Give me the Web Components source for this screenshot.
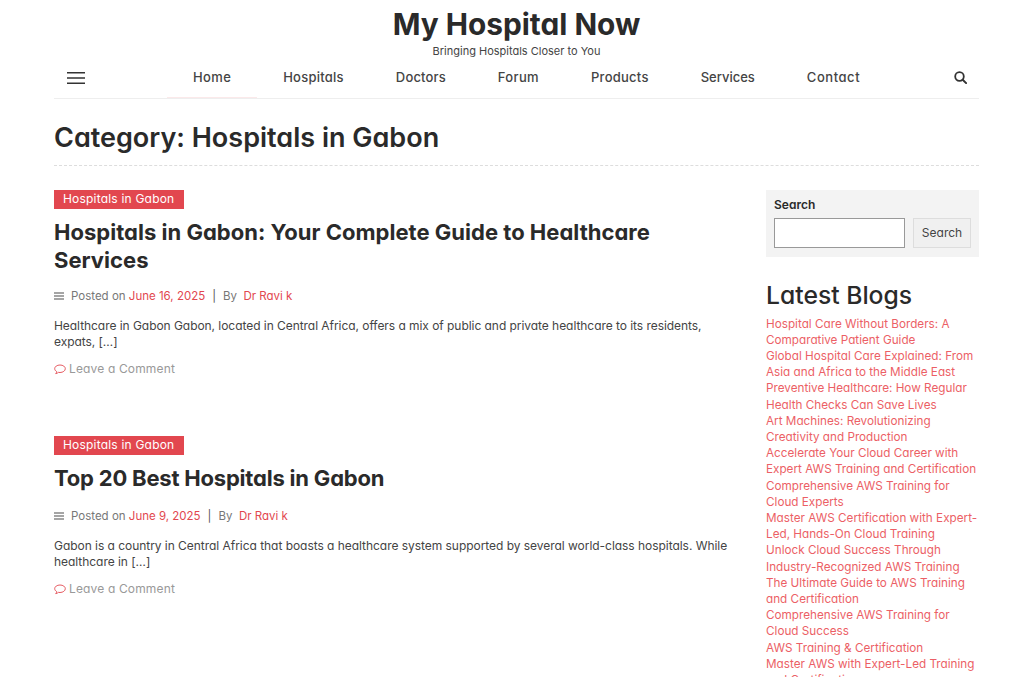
<!DOCTYPE html>
<html lang="en">
<head>
<meta charset="UTF-8">
<title>My Hospital Now</title>
<style>
  html, body { margin: 0; height: 677px; overflow: hidden; background: #fff; }
  body { font-family: Inter, "Liberation Sans", sans-serif; font-feature-settings: "cv11"; color: #333; }
</style>
</head>
<body>
<site-page>
  <site-header></site-header>
  <page-title>Category: Hospitals in Gabon</page-title>
  <div style="display:grid;grid-template-columns:676px 213px;justify-content:space-between;margin-top:24px">
    <div>
      <blog-post style="--title-ls:.02px;--text-ls:-.05px" title-text="Hospitals in Gabon: Your Complete Guide to Healthcare Services" date="June 16, 2025" excerpt="Healthcare in Gabon Gabon, located in Central Africa, offers a mix of public and private healthcare to its residents, expats, [&#8230;]"></blog-post>
      <blog-post style="--title-ls:-.2px;--text-ls:-.04px;--meta-gap:16px" title-text="Top 20 Best Hospitals in Gabon" date="June 9, 2025" excerpt="Gabon is a country in Central Africa that boasts a healthcare system supported by several world-class hospitals. While healthcare in [&#8230;]"></blog-post>
    </div>
    <side-bar></side-bar>
  </div>
</site-page>
<script>
  class SitePage extends HTMLElement {
    constructor() {
      super();
      this.attachShadow({mode: "open"});
      this.shadowRoot.innerHTML = `
        <style>
          :host { display: block; padding: 0 45px 0 54px; height: 677px; overflow: hidden; }
        </style>
        <slot></slot>`;
    }
  }

  class SiteHeader extends HTMLElement {
    constructor() {
      super();
      this.attachShadow({mode: "open"});
      const links = [["Home", .35], ["Hospitals", .25], ["Doctors", .15], ["Forum", .35], ["Products", .25], ["Services", 0], ["Contact", .55]];
      this.shadowRoot.innerHTML = `
        <style>
          :host { display: block; }
          .brand { text-align: center; height: 60px; padding-top: 6px; box-sizing: border-box; }
          .name { font-size: 29.8px; font-weight: 700; line-height: 36px; color: #2a2a2a; }
          .tag { font-size: 11px; line-height: 14px; margin-top: 2px; color: #444; }
          nav { display: flex; align-items: stretch; height: 39px; border-bottom: 1px solid #eee; box-sizing: border-box; }
          .burger { width: 113px; padding: 0 0 3px 13px; box-sizing: border-box; display: flex; align-items: center; }
          ul { display: flex; margin: 0; padding: 0; list-style: none; flex: 1; }
          li { padding: 0 26px; font-size: 13px; font-weight: 500; line-height: 35px; color: #444; }
          li.on { box-shadow: inset 0 -1px 0 #fbe9ea; }
          .find { display: flex; align-items: center; padding: 0 12px 3px 0; }
        </style>
        <div class="brand">
          <div class="name">My Hospital Now</div>
          <div class="tag">Bringing Hospitals Closer to You</div>
        </div>
        <nav>
          <div class="burger">
            <svg width="18" height="12" viewBox="0 0 18 12"><path d="M0 .7h18M0 6h18M0 11.300h18" stroke="#333" stroke-width="1.4"/></svg>
          </div>
          <ul>${links.map(([l, s], i) => `<li class="${i ? "" : "on"}" style="letter-spacing:${s}px">${l}</li>`).join("")}</ul>
          <div class="find">
            <svg width="13" height="13" viewBox="0 0 13 13"><circle cx="5.5" cy="5.5" r="4.3" fill="none" stroke="#333" stroke-width="1.8"/><path d="M8.7 8.7l3.4 3.4" stroke="#333" stroke-width="2" stroke-linecap="round"/></svg>
          </div>
        </nav>`;
    }
  }

  class PageTitle extends HTMLElement {
    constructor() {
      super();
      this.attachShadow({mode: "open"});
      this.shadowRoot.innerHTML = `
        <style>
          :host { display: block; font-size: 27px; font-weight: 600; line-height: 34px; color: #2a2a2a;
                  padding: 22px 0 10px; border-bottom: 1px dashed #ddd; }
        </style>
        <slot></slot>`;
    }
  }

  class BlogPost extends HTMLElement {
    constructor() {
      super();
      this.attachShadow({mode: "open"});
      this.shadowRoot.innerHTML = `
        <style>
          :host { display: block; margin-bottom: 59px; }
          .cat { display: inline-block; background: #e2474f; color: #fff; font-size: 12px; letter-spacing: .2px; line-height: 18px; padding: 0 10px 1px 9px; vertical-align: top; }
          h2 { margin: 8px 0 0; font-size: 22px; font-weight: 700; line-height: 28px; color: #2a2a2a; letter-spacing: var(--title-ls, 0); }
          .meta { margin-top: var(--meta-gap, 14px); font-size: 11.5px; line-height: 16px; color: #777; display: flex; align-items: center; }
          .meta svg { margin-right: 7px; }
          .meta b { font-weight: 400; color: #e2474f; }
          .sep { margin: 0 7px; color: #555; }
          p { margin: 14px 0 0; font-size: 12px; letter-spacing: var(--text-ls, 0); line-height: 16px; color: #444; }
          .more { margin-top: 11px; font-size: 12px; letter-spacing: .15px; line-height: 16px; color: #999; display: flex; align-items: center; gap: 3px; }
        </style>
        <span class="cat">Hospitals in Gabon</span>
        <h2></h2>
        <div class="meta">
          <svg width="10" height="8" viewBox="0 0 10 8"><path d="M0 1h10M0 4h10M0 7h10" stroke="#888" stroke-width="1.4"/></svg>
          Posted on&nbsp;<b class="date"></b><span class="sep">|</span>By&nbsp;&nbsp;<b>Dr Ravi k</b>
        </div>
        <p></p>
        <div class="more">
          <svg width="12" height="11" viewBox="0 0 12 11"><path d="M6 1C3 1 .7 2.600 .7 4.700c0 1.200.8 2.200 2 2.900-.1.800-.5 1.500-1 2 1.100-.1 2-.6 2.700-1.200.5.100 1 .1 1.600.1 3 0 5.300-1.700 5.300-3.800S9 1 6 1z" fill="none" stroke="#e2474f" stroke-width=".9"/></svg>
          Leave a Comment
        </div>`;
    }

    connectedCallback() {
      this.shadowRoot.querySelector("h2").textContent = this.getAttribute("title-text");
      this.shadowRoot.querySelector(".date").textContent = this.getAttribute("date");
      this.shadowRoot.querySelector("p").textContent = this.getAttribute("excerpt");
    }
  }

  class SideBar extends HTMLElement {
    constructor() {
      super();
      this.attachShadow({mode: "open"});
      const blogs = [
        "Hospital Care Without Borders: A<br>Comparative Patient Guide",
        "Global Hospital Care Explained: From<br>Asia and Africa to the Middle East",
        "Preventive Healthcare: How Regular<br>Health Checks Can Save Lives",
        "Art Machines: Revolutionizing<br>Creativity and Production",
        "Accelerate Your Cloud Career with<br>Expert AWS Training and Certification",
        "Comprehensive AWS Training for<br>Cloud Experts",
        "Master AWS Certification with Expert-<br>Led, Hands-On Cloud Training",
        "Unlock Cloud Success Through<br>Industry-Recognized AWS Training",
        "The Ultimate Guide to AWS Training<br>and Certification",
        "Comprehensive AWS Training for<br>Cloud Success",
        "AWS Training &amp; Certification",
        "Master AWS with Expert-Led Training<br>and Certification"
      ];
      this.shadowRoot.innerHTML = `
        <style>
          :host { display: block; }
          .box { background: #f3f3f3; padding: 8px; height: 67px; box-sizing: border-box; }
          label { display: block; font-size: 12px; font-weight: 600; line-height: 14px; color: #2a2a2a; margin-bottom: 6px; }
          .row { display: flex; gap: 8px; }
          input { flex: 1; min-width: 0; height: 30px; box-sizing: border-box; margin: 0; background: #fff; border: 1px solid #999; }
          button { width: 58px; height: 30px; margin: 0; box-sizing: border-box; border: 1px solid #ddd; background: #f0f0f0; font: 12px Inter, sans-serif; font-feature-settings: "cv11"; color: #444; padding: 0 0 2px; }
          h3 { margin: 22px 0 0; font-size: 24.700px; font-weight: 500; line-height: 32px; color: #2a2a2a; }
          ul { margin: 4.6px 0 0; padding: 0; list-style: none; font-size: 11.72px; line-height: 16.2px; color: #ec5f66; white-space: nowrap; }
        </style>
        <div class="box">
          <label>Search</label>
          <div class="row"><input type="text"><button>Search</button></div>
        </div>
        <h3>Latest Blogs</h3>
        <ul>${blogs.map(b => `<li>${b}</li>`).join("")}</ul>`;
    }
  }

  customElements.define("site-page", SitePage);
  customElements.define("site-header", SiteHeader);
  customElements.define("page-title", PageTitle);
  customElements.define("blog-post", BlogPost);
  customElements.define("side-bar", SideBar);
</script>
</body>
</html>
